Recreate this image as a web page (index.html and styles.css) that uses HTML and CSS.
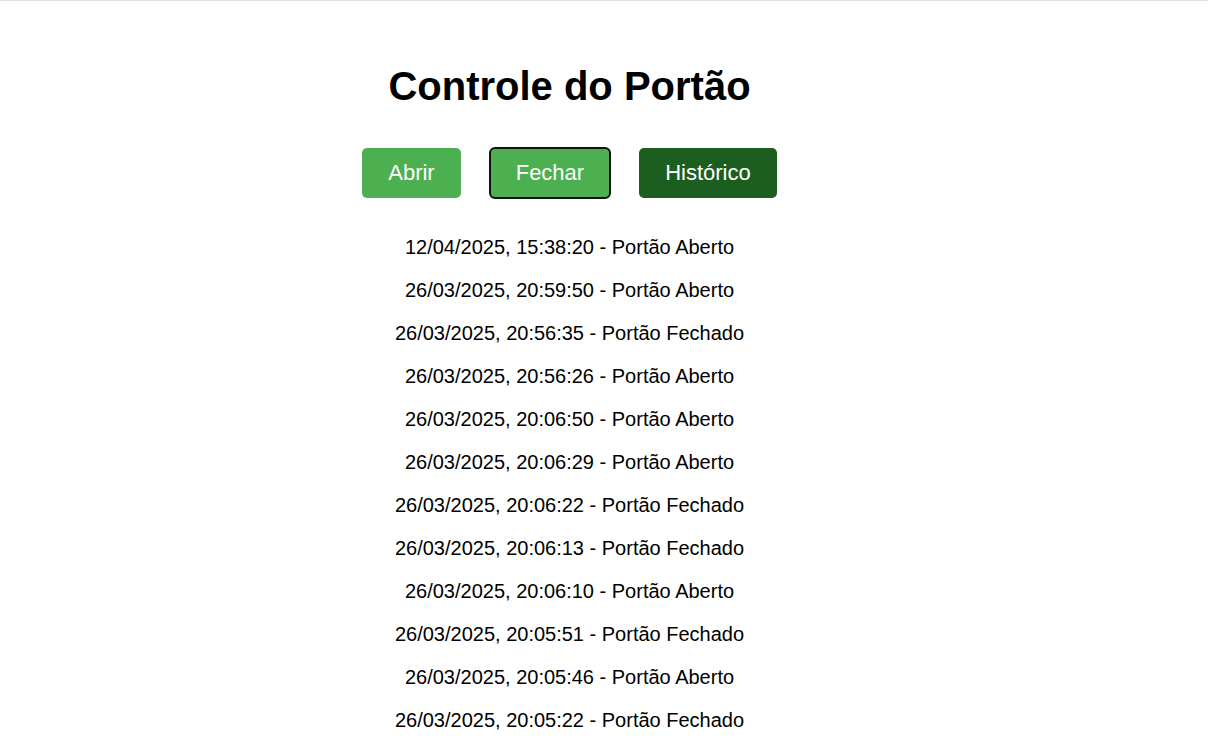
FILE: index.html
```html
<!DOCTYPE html>
<html lang="pt-BR">
<head>
<meta charset="utf-8">
<title>Controle do Portão</title>
<link rel="stylesheet" href="styles.css">
</head>
<body>
<main class="page">
  <h1 class="title">Controle do Portão</h1>
  <div class="actions">
    <button class="btn btn-open" type="button">Abrir</button>
    <button class="btn btn-close is-focused" type="button">Fechar</button>
    <button class="btn btn-history" type="button">Histórico</button>
  </div>
  <ul class="history">
    <li>12/04/2025, 15:38:20 - Portão Aberto</li>
    <li>26/03/2025, 20:59:50 - Portão Aberto</li>
    <li>26/03/2025, 20:56:35 - Portão Fechado</li>
    <li>26/03/2025, 20:56:26 - Portão Aberto</li>
    <li>26/03/2025, 20:06:50 - Portão Aberto</li>
    <li>26/03/2025, 20:06:29 - Portão Aberto</li>
    <li>26/03/2025, 20:06:22 - Portão Fechado</li>
    <li>26/03/2025, 20:06:13 - Portão Fechado</li>
    <li>26/03/2025, 20:06:10 - Portão Aberto</li>
    <li>26/03/2025, 20:05:51 - Portão Fechado</li>
    <li>26/03/2025, 20:05:46 - Portão Aberto</li>
    <li>26/03/2025, 20:05:22 - Portão Fechado</li>
  </ul>
</main>
</body>
</html>
```

FILE: styles.css
```css
html, body {
  margin: 0;
  padding: 0;
  background: #ffffff;
}

body {
  border-top: 1px solid #dcdfe8;
  font-family: "Liberation Sans", Arial, sans-serif;
  color: #000000;
  overflow: hidden;
}

.page {
  width: 1139px;
  text-align: center;
}

.title {
  margin: 62px 0 39px;
  font-size: 40px;
  line-height: 46px;
  font-weight: bold;
}

.actions {
  display: flex;
  justify-content: center;
  gap: 29px;
}

.btn {
  font-family: "Liberation Sans", Arial, sans-serif;
  font-size: 22px;
  line-height: 26px;
  padding: 12px 26px;
  border: none;
  border-radius: 5px;
  color: #ffffff;
  background: #4caf50;
  cursor: pointer;
}

.btn-history {
  background: #1b5e20;
}

.is-focused {
  outline: 2px solid #111111;
  outline-offset: -1px;
}

.history {
  list-style: none;
  margin: 38px 0 0;
  padding: 0;
  display: flex;
  flex-direction: column;
  gap: 20px;
  font-size: 20px;
  line-height: 23px;
}
```
